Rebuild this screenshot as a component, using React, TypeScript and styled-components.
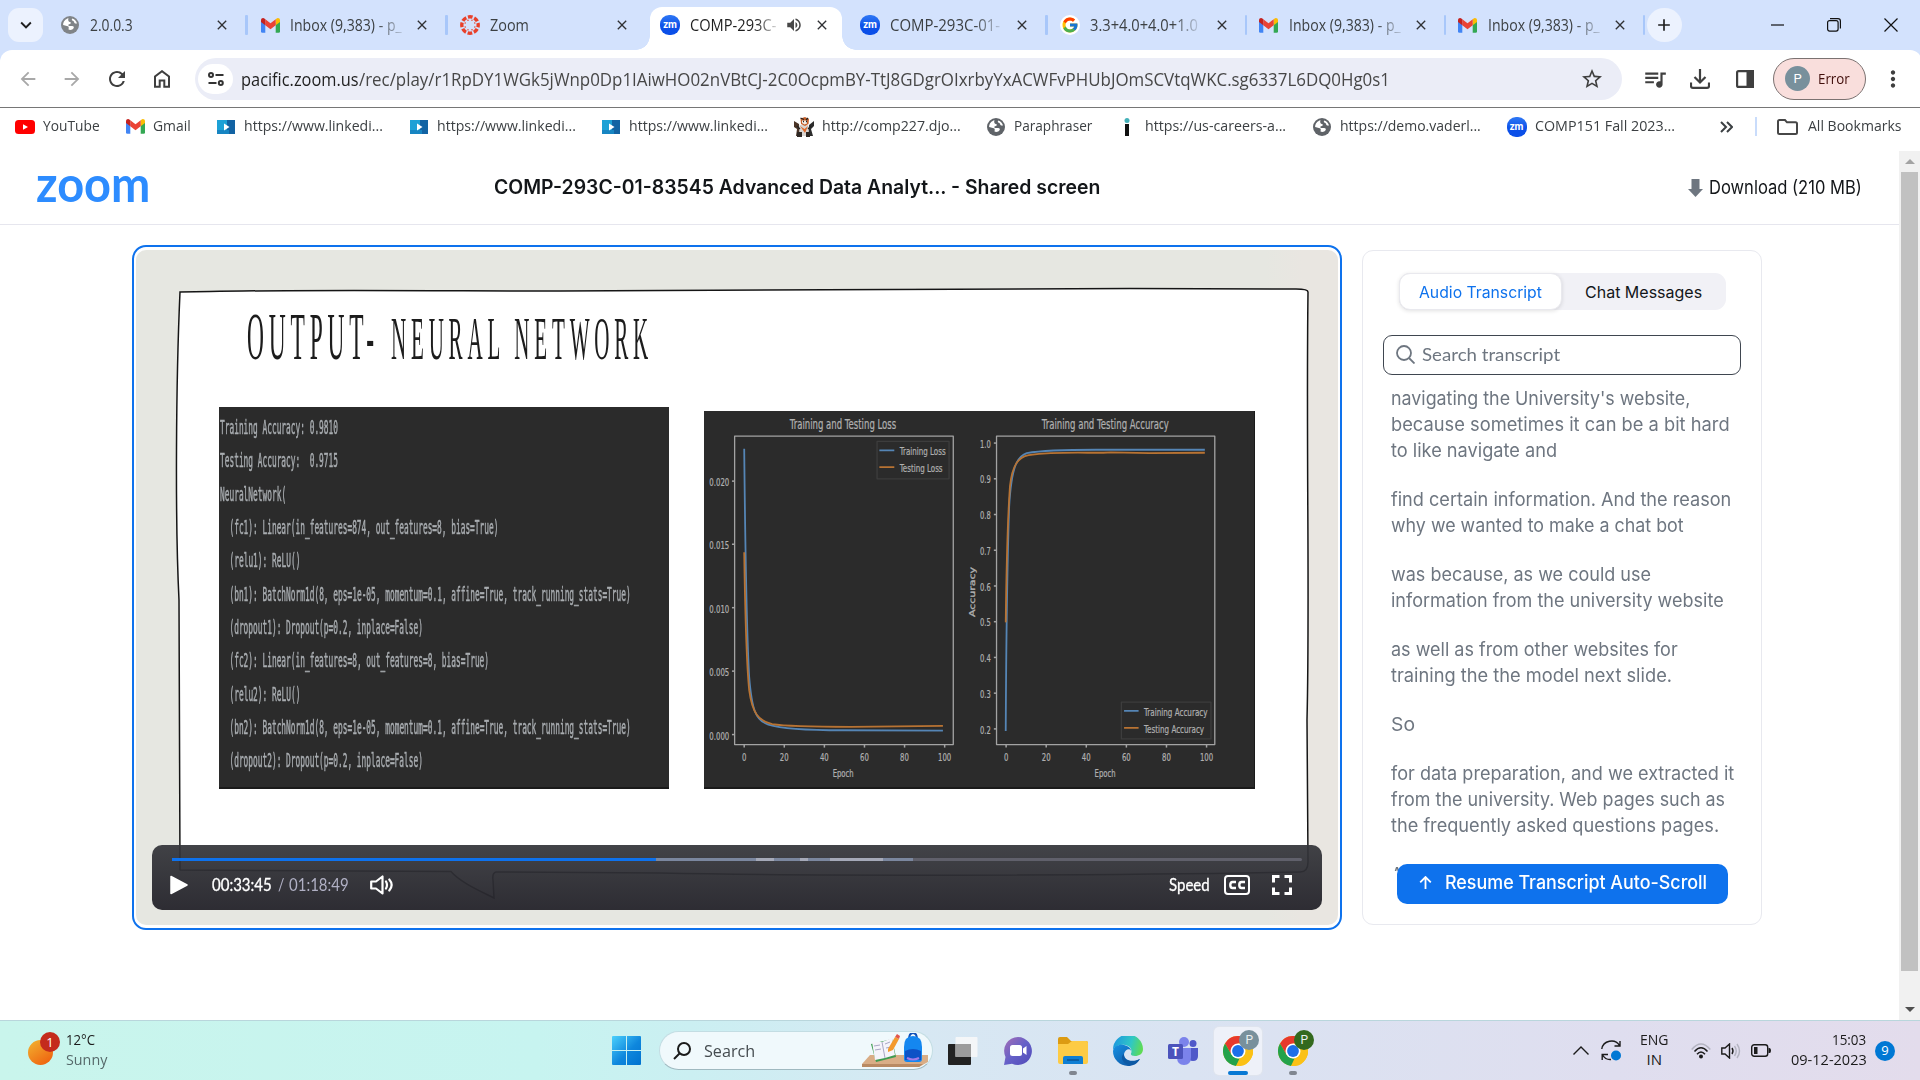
import React, { useLayoutEffect, useRef, useState } from "react";
import styled, { createGlobalStyle, css } from "styled-components";
import {
  MdArrowBack,
  MdArrowForward,
  MdRefresh,
  MdStarOutline,
  MdQueueMusic,
  MdMoreVert,
  MdClose,
  MdAdd,
  MdVolumeUp,
  MdKeyboardArrowDown,
} from "react-icons/md";
import { FcGoogle } from "react-icons/fc";

const UI = `"Open Sans", "Noto Sans", sans-serif`;
const PAGE = `Inter, "Liberation Sans", sans-serif`;

const Global = createGlobalStyle`
  html, body { margin: 0; padding: 0; background: #fff; overflow: hidden; }
  *, *::before, *::after { box-sizing: border-box; }
  svg { display: block; flex: none; }
`;

/* ---------- text fitted to a fixed advance width ---------- */

const FitBox = styled.span<{ $w: number }>`
  display: block;
  flex: none;
  width: ${(p) => p.$w}px;
  white-space: pre;
`;
const FitInner = styled.span`
  display: inline-block;
  transform-origin: 0 50%;
`;

function Fit({ w, children }: { w: number; children: string }) {
  const ref = useRef<HTMLSpanElement>(null);
  const [scale, setScale] = useState(1);
  useLayoutEffect(() => {
    if (ref.current && ref.current.offsetWidth) setScale(w / ref.current.offsetWidth);
  }, [w, children]);
  return (
    <FitBox $w={w}>
      <FitInner ref={ref} style={{ transform: `scaleX(${scale})` }}>
        {children}
      </FitInner>
    </FitBox>
  );
}

/* ---------- shared icons ---------- */

const Globe = ({ color = "#5f6368", size = 18 }) => (
  <svg width={size} height={size} viewBox="0 0 18 18">
    <circle cx="9" cy="9" r="9" fill={color} />
    <path
      d="M7.5 2.2c-3.2.7-5.4 3.400-5.400 6.800l4.700 1.300c.8.2 1 .8.9 1.600l-.2 1.700c1.600.6 4.300.4 5.200-1.500.5-1.300-.3-2.100-1.500-2.100H8.300c-1 0-1.600-1.500-.3-1.800l1-.3c1.200-.4.9-1.500 0-1.800-1.500-.5-2.300-1.700-1.500-3.900Z"
      fill="#fff"
    />
    <path d="M11.300 2.500c-.9 1.300-.4 2 .6 2.300 1.500.5.8 2.200 2.100 2.600l2 .2c-.4-2.400-2.200-4.400-4.700-5.100Z" fill="#fff" />
  </svg>
);

const Gmail = () => (
  <svg width="19" height="15" viewBox="0 0 19 15">
    <path d="M0 2.500V13.500Q0 14.800 1.300 14.800H4.300V5Z" fill="#4285f4" />
    <path d="M19 2.500V13.500Q19 14.800 17.700 14.800H14.700V5Z" fill="#34a853" />
    <path d="M14.700 1.300V7.200L19 4V2.200C19 .2 16.800-.7 15.300.700Z" fill="#fbbc04" />
    <path d="M4.300 7.200V1.300L9.500 5.200 14.700 1.300V7.200L9.500 11.200Z" fill="#ea4335" />
    <path d="M0 2.200V4L4.300 7.200V1.300L3.700.700C2.200-.7 0 .2 0 2.200Z" fill="#c5221f" />
  </svg>
);

const CanvasLogo = () => (
  <svg width="20" height="20" viewBox="0 0 20 20">
    <circle cx="10" cy="10" r="8.200" fill="none" stroke="#e8402a" strokeWidth="3.400" strokeDasharray="4.700 1.740" strokeDashoffset="2.350" />
    {[0, 45, 90, 135, 180, 225, 270, 315].map((a) => (
      <circle key={a} cx="10" cy="4.800" r=".75" fill="#e8402a" transform={`rotate(${a + 22} 10 10)`} />
    ))}
  </svg>
);

const ZmBadge = styled.span`
  width: 20px;
  height: 20px;
  flex: none;
  border-radius: 9px;
  background: linear-gradient(#2f78f5, #0b4fe8 60%);
  color: #fff;
  font: 900 10.500px/18px Lato, sans-serif;
  text-align: center;
`;

const GoogleChip = styled.span`
  width: 20px;
  height: 20px;
  flex: none;
  border-radius: 50%;
  background: #fff;
  display: grid;
  place-items: center;
`;

/* ---------- browser chrome ---------- */

const Screen = styled.div`
  width: 1920px;
  height: 1080px;
  display: flex;
  flex-direction: column;
  background: #fff;
  font-family: ${UI};
  overflow: hidden;
`;

const TabStrip = styled.div`
  height: 50px;
  flex: none;
  background: #d3e2fd;
  display: flex;
  align-items: center;
  padding-left: 8px;
`;

const ChipButton = styled.div<{ $round?: boolean }>`
  width: 35px;
  height: 34px;
  flex: none;
  border-radius: ${(p) => (p.$round ? "17px" : "11px")};
  background: #ecf2fe;
  color: #1f1f1f;
  display: grid;
  place-items: center;
`;

const TabList = styled.div`
  display: flex;
  align-self: stretch;
  margin-left: 7px;
`;

const TabBox = styled.div<{ $w: number; $active?: boolean; $sep?: boolean }>`
  position: relative;
  width: ${(p) => p.$w}px;
  height: 50px;
  display: flex;
  align-items: center;
  padding: 0 4px 0 10px;
  color: ${(p) => (p.$active ? "#1f1f1f" : "#3c4043")};
  font-size: 15.500px;
  ${(p) =>
    p.$sep &&
    css`
      &::after {
        content: "";
        position: absolute;
        left: 195px;
        top: 15px;
        width: 2.500px;
        height: 20px;
        background: #a8c7fa;
        border-radius: 1px;
      }
    `}
  ${(p) =>
    p.$active &&
    css`
      z-index: 1;
      &::before {
        content: "";
        position: absolute;
        z-index: -1;
        left: 0;
        top: 7px;
        width: 192px;
        height: 43px;
        border-radius: 12px 12px 0 0;
        background: #fff;
      }
    `}
`;

const TabFoot = styled.i<{ $right?: boolean }>`
  position: absolute;
  bottom: 0;
  width: 14px;
  height: 14px;
  ${(p) => (p.$right ? "left: 192px;" : "left: -14px;")}
  background: radial-gradient(circle at ${(p) => (p.$right ? "100%" : "0")} 0, transparent 13.500px, #fff 14px);
`;

const TabTitle = styled.div<{ $w: number; $fade?: boolean }>`
  width: ${(p) => p.$w}px;
  margin-left: 10px;
  line-height: 24px;
  ${(p) => p.$fade && "mask-image: linear-gradient(90deg, #000 76%, rgba(0,0,0,.15));"}
`;

const TabClose = styled.span`
  position: absolute;
  left: 164px;
  display: flex;
  color: #303134;
`;
const TabAudio = styled.span`
  margin-left: 8px;
  display: flex;
  color: #474747;
`;
const IconSlot = styled.span<{ $w?: number }>`
  width: ${(p) => p.$w ?? 20}px;
  flex: none;
  display: flex;
  justify-content: center;
`;

const WindowButtons = styled.div`
  margin-left: auto;
  display: flex;
  align-items: center;
  gap: 43px;
  padding-right: 22px;
`;

const Toolbar = styled.div`
  height: 58px;
  flex: none;
  display: flex;
  align-items: center;
  border-bottom: 1px solid #767676;
  color: #474747;
  background: linear-gradient(#d3e2fd, #d3e2fd) 0 0 / 100% 12px no-repeat;
`;
const ToolbarInner = styled.div`
  flex: 1;
  height: 57px;
  display: flex;
  align-items: center;
  background: #fff;
  border-radius: 12px 12px 0 0;
  padding: 0 16px 0 16px;
`;
const ToolIcon = styled.span<{ $w: number; $dim?: boolean }>`
  width: ${(p) => p.$w}px;
  flex: none;
  display: flex;
  justify-content: center;
  color: ${(p) => (p.$dim ? "#a8a8a8" : "#3f3f3f")};
`;
const Omnibox = styled.div`
  width: 1427px;
  height: 42px;
  flex: none;
  border-radius: 21px;
  background: #ebedf7;
  display: flex;
  align-items: center;
  padding: 0 18px 0 3px;
  font-size: 17.500px;
  color: #474747;
`;
const SiteChip = styled.span`
  width: 35px;
  height: 30px;
  border-radius: 17px;
  background: #fff;
  display: grid;
  place-items: center;
  margin-right: 8px;
`;
const Host = styled.span`
  color: #1f1f1f;
`;
const Grow = styled.span`
  flex: 1;
`;
const ErrorPill = styled.div`
  width: 93px;
  height: 42px;
  flex: none;
  display: flex;
  align-items: center;
  gap: 8px;
  padding-left: 11px;
  border: 1px solid #7b7271;
  border-radius: 21px;
  background: #f9dedc;
  color: #410e0b;
  font-size: 15px;
  ${FitBox} {
    margin-top: -2px;
  }
`;
const Avatar = styled.span`
  width: 25px;
  height: 25px;
  border-radius: 50%;
  background: #78909c;
  color: #fff;
  font: 400 13px/25px Roboto, sans-serif;
  text-align: center;
`;

const Bookmarks = styled.div`
  height: 43px;
  flex: none;
  display: flex;
  align-items: center;
  padding: 0 0 6px 15px;
  font-size: 15px;
  line-height: 20px;
  color: #3c4043;
  ${FitBox} {
    margin-top: -3px;
  }
`;
const Bookmark = styled.div<{ $w: number }>`
  width: ${(p) => p.$w}px;
  flex: none;
  display: flex;
  align-items: center;
  gap: 8px;
`;
const BarDivider = styled.span`
  width: 2px;
  height: 19px;
  background: #c9dcfb;
  margin: 0 20px 0 22px;
`;

const YouTube = () => (
  <svg width="20" height="14" viewBox="0 0 20 14">
    <rect width="20" height="14" rx="3.500" fill="#f00" />
    <path d="M8 4.200 13 7 8 9.800Z" fill="#fff" />
  </svg>
);
const LinkedInLearning = () => (
  <svg width="18" height="14" viewBox="0 0 18 14">
    <rect width="18" height="14" fill="#1da1d6" />
    <path d="M10 0h8v14H10Z" fill="#1263a3" />
    <path d="M0 10h12v4H0Z" fill="#1785c2" />
    <path d="M7 3.600 12.500 7 7 10.400Z" fill="#fff" />
  </svg>
);
const TigerMascot = () => (
  <svg width="20" height="20" viewBox="0 0 20 20">
    <path d="M0 4 5 7 6 19H2L3 12 0 10Z" fill="#4a3427" />
    <path d="M20 4 15 8 14 19h5L17 12 20 9Z" fill="#2c2c2c" />
    <path d="M6 8h8l1 11H5Z" fill="#d9d5d2" />
    <path d="M6.500 1.500 11 0l4 2-.5 5L11 9 7 7Z" fill="#c7602b" />
    <path d="M8 3.500h5v3l-2.500 1L8 6Z" fill="#f3ece4" />
    <path d="m6 9 4.500 3L14 9l-3 7Z" fill="#e06a2c" />
    <path d="M6.500 1 10 2.500M14 1l-2 2M9 4.500h1M12 4.500h1M3 9l3 3M17 9l-3 3" stroke="#222" strokeWidth="1.300" />
    <path d="M3 15h5v5H3ZM12 15h4v5h-4Z" fill="#2d2723" />
  </svg>
);
const InfoFigure = () => (
  <svg width="6" height="18" viewBox="0 0 6 18">
    <circle cx="3" cy="2.500" r="2.500" fill="#45b1b9" />
    <rect x="1" y="6" width="4" height="12" fill="#111" />
  </svg>
);

/* ---------- page ---------- */

const Viewport = styled.div`
  height: 869px;
  flex: none;
  display: flex;
`;
const Page = styled.div`
  width: 1899px;
  font-family: ${PAGE};
`;
const PageHeader = styled.header`
  height: 74px;
  border-bottom: 1px solid #e6e6ee;
  display: flex;
  align-items: center;
  padding: 0 37px 0 36px;
`;
const Brand = styled.div`
  width: 458px;
  height: 74px;
  color: #2d8cff;
  font: 700 49px/64px Lato, sans-serif;
`;
const Heading = styled.div`
  font-size: 19.500px;
  font-weight: 600;
  line-height: 30px;
  color: #131619;
  margin-top: -1px;
`;
const Download = styled.div`
  margin-left: auto;
  display: flex;
  align-items: center;
  gap: 6px;
  font-size: 18.500px;
  line-height: 30px;
  color: #131619;
  ${FitBox} {
    margin-top: -1px;
  }
`;
const Main = styled.main`
  display: flex;
  padding: 20px 0 0 132px;
  align-items: flex-start;
`;
const Player = styled.section`
  width: 1210px;
  height: 685px;
  flex: none;
  border: 2px solid #0e72ed;
  border-radius: 14px;
  padding: 3px 2px;
`;
const Slide = styled.div`
  position: relative;
  width: 1202px;
  height: 675px;
  border-radius: 10px;
  overflow: hidden;
  background: linear-gradient(90deg, #e6e7e1 0, #e6e7e1 94%, #e9e6e1 97%);
`;
const SlideFrame = styled.svg`
  position: absolute;
  inset: 0;
`;
const SlideTitle = styled.div`
  position: relative;
  height: 157px;
  padding: 52px 0 0 111px;
  display: flex;
  align-items: baseline;
  gap: 12px;
  font-family: "Liberation Serif", serif;
  line-height: 1;
  color: #1c1c1c;
`;
const TitleWord = styled.div<{ $size: number }>`
  font-size: ${(p) => p.$size}px;
  letter-spacing: 14px;
`;
const Panels = styled.div`
  position: relative;
  display: flex;
  align-items: flex-end;
  padding-left: 83px;
  gap: 35px;
`;
const CodePanel = styled.div`
  width: 450px;
  height: 382px;
  background: #2b2b2b;
  padding: 4px 0 0 1px;
  color: #a9adb1;
  font: 400 19px/33.350px "DejaVu Sans Mono", monospace;
  -webkit-text-stroke: 0.500px #a9adb1;
  box-shadow: inset 0 -2px 0 #1a1a1a;
`;
const ChartPanel = styled.div`
  width: 551px;
  height: 378px;
  background: #2b2b2b;
  box-shadow: inset 0 -2px 0 #1a1a1a, inset -1px 0 0 #1a1a1a;
`;

const Controls = styled.div`
  position: absolute;
  left: 16px;
  top: 595px;
  width: 1170px;
  height: 65px;
  border-radius: 10px;
  background: linear-gradient(rgba(52, 53, 58, 0.93), rgba(38, 37, 44, 0.96));
  padding: 13px 20px 0;
  color: #fff;
  font-family: Lato, sans-serif;
`;
const Track = styled.div`
  display: flex;
  height: 3px;
  background: #60606b;
  border-radius: 2px;
`;
const Segment = styled.i<{ $w: number; $c: string }>`
  width: ${(p) => p.$w}px;
  height: 3px;
  background: ${(p) => p.$c};
`;
const ControlRow = styled.div`
  display: flex;
  align-items: center;
  height: 28px;
  margin: 10px 0 0 -2px;
  font-size: 16.500px;
`;
const Space = styled.span<{ $w: number }>`
  width: ${(p) => p.$w}px;
  flex: none;
`;
const Muted = styled.span`
  color: #b0b0c4;
  display: flex;
  gap: 5px;
`;
const Strong = styled.span`
  -webkit-text-stroke: 0.300px #fff;
`;

const Sidebar = styled.aside`
  width: 400px;
  height: 675px;
  margin: 5px 0 0 20px;
  border: 1px solid #e8e9ef;
  border-radius: 11px;
  padding: 22px 20px 0;
  position: relative;
`;
const Segmented = styled.div`
  width: 327px;
  height: 37px;
  margin-left: 16px;
  border-radius: 11px;
  background: #f1f1f6;
  display: flex;
  font-size: 16px;
  line-height: 36px;
`;
const SegmentTab = styled.div<{ $on?: boolean }>`
  padding: ${(p) => (p.$on ? "0 0 0 19px" : "1px 0 0 23px")};
  width: 163px;
  border-radius: 11px;
  color: ${(p) => (p.$on ? "#0e72ed" : "#131619")};
  ${(p) => p.$on && "background:#fff; border: 1px solid #e9e9ee; box-shadow: 0 1px 4px rgba(0,0,0,.12);"}
`;
const SearchField = styled.div`
  width: 358px;
  height: 40px;
  margin-top: 25px;
  border: 1px solid #3f4650;
  border-radius: 9px;
  display: flex;
  align-items: center;
  gap: 6.500px;
  padding: 0 0 2px 12px;
  color: #6e7680;
  font: 400 18px/30px Lato, sans-serif;
  ${FitBox} {
    margin-top: -1px;
  }
`;
const Transcript = styled.div`
  height: 496px;
  overflow: hidden;
  padding: 10px 0 0 7.500px;
  color: #6e7680;
  font-size: 18.500px;
  line-height: 26px;
`;
const Paragraph = styled.div`
  margin-bottom: 23px;
`;
const ResumeButton = styled.div`
  position: absolute;
  left: 34px;
  top: 613px;
  width: 331px;
  height: 40px;
  border-radius: 10px;
  background: #0e72ed;
  color: #fff;
  display: flex;
  align-items: center;
  gap: 13px;
  padding: 0 0 4px 22px;
  font-size: 18.500px;
  font-weight: 500;
`;

const Scrollbar = styled.div`
  width: 21px;
  background: #f1f1f1;
  display: flex;
  flex-direction: column;
  align-items: center;
`;
const ScrollArrow = styled.div<{ $down?: boolean }>`
  height: 21px;
  flex: none;
  display: grid;
  place-items: center;
  &::before {
    content: "";
    border: 5px solid transparent;
    ${(p) => (p.$down ? "border-top-color:#505050;border-bottom:0;" : "border-bottom-color:#a3a3a3;border-top:0;")}
  }
`;
const Thumb = styled.div`
  width: 17px;
  height: 799px;
  background: #c1c1c1;
  margin-bottom: auto;
`;

/* ---------- taskbar ---------- */

const Taskbar = styled.div`
  height: 60px;
  flex: none;
  border-top: 1px solid #b9d6dc;
  background: linear-gradient(90deg, #c9f5ec 0, #c7f4f0 28%, #cbeff2 36%, #d7e8f3 48%, #dae3f2 62%, #dfdeef 84%, #e3dcec);
  display: flex;
  align-items: center;
  font-size: 15px;
  color: #1b1b1b;
`;
const Weather = styled.div`
  width: 612px;
  display: flex;
  align-items: center;
  padding-left: 28px;
  svg {
    margin-top: -4px;
  }
`;
const Stack = styled.div<{ $align?: string }>`
  display: flex;
  flex-direction: column;
  align-items: ${(p) => p.$align ?? "flex-start"};
  line-height: 20px;
  margin-top: -3px;
`;
const Soft = styled.span`
  color: #56696a;
`;
const SearchPill = styled.div`
  width: 274px;
  height: 39px;
  margin-left: 18px;
  border-radius: 20px;
  background: #f0f9fc;
  border: 1px solid #c3dde3;
  border-bottom-color: #9fb9c0;
  display: flex;
  align-items: center;
  padding: 0 4px 0 13px;
  gap: 13px;
  font-size: 16.500px;
  color: #454c50;
  overflow: hidden;
`;
const Apps = styled.div`
  display: flex;
  gap: 7.150px;
  margin-left: 5.500px;
`;
const AppSlot = styled.div<{ $active?: boolean; $mark?: string }>`
  position: relative;
  width: 48px;
  height: 48px;
  border-radius: 5px;
  display: grid;
  place-items: center;
  ${(p) => p.$active && "background:#eef1f9; box-shadow: 0 0 0 1px #dfe4ee;"}
  &::after {
    content: "";
    position: absolute;
    bottom: 0;
    height: 4px;
    border-radius: 2px;
    left: 50%;
    transform: translateX(-50%);
    ${(p) => (p.$mark === "bar" ? "width:20px;background:#0878d4;" : p.$mark === "dot" ? "width:8px;background:#808690;" : "width:0;")}
  }
`;
const AppBadge = styled.span<{ $c: string }>`
  position: absolute;
  right: 3px;
  top: 3px;
  width: 20px;
  height: 20px;
  border-radius: 50%;
  background: ${(p) => p.$c};
  color: #e9eef0;
  font: 400 12px/20px Roboto, sans-serif;
  text-align: center;
`;
const Tray = styled.div`
  margin-left: auto;
  display: flex;
  align-items: center;
  padding-right: 25px;
`;
const Count = styled.span`
  width: 20px;
  height: 20px;
  border-radius: 50%;
  background: #0078d4;
  color: #fff;
  font-size: 13px;
  line-height: 19px;
  text-align: center;
`;

const Chrome = () => (
  <svg width="30" height="30" viewBox="0 0 30 30">
    <circle cx="15" cy="15" r="15" fill="#fbc116" />
    <path d="M2 7.500A15 15 0 0 1 28 7.500H15L8.500 18.750Z" fill="#e8392c" />
    <path d="M2 7.500 8.500 18.750 15 22.500H16.500L13 29.900A15 15 0 0 1 2 7.500Z" fill="#23a24b" />
    <path d="M15 7.500H28A15 15 0 0 1 13 29.900L21.500 18.750Z" fill="#fbc116" />
    <circle cx="15" cy="15" r="7.500" fill="#fff" />
    <circle cx="15" cy="15" r="5.900" fill="#1d6fe8" />
  </svg>
);

/* ---------- data ---------- */

type TabInfo = { icon: React.ReactNode; text: string; w: number; size: number; fade?: boolean; active?: boolean; sep?: boolean };
const tabs: TabInfo[] = [
  { icon: <Globe color="#808488" />, text: "2.0.0.3", w: 43, size: 200, sep: true },
  { icon: <Gmail />, text: "Inbox (9,383) - p_", w: 112, size: 200, fade: true, sep: true },
  { icon: <CanvasLogo />, text: "Zoom", w: 39, size: 200 },
  { icon: <ZmBadge>zm</ZmBadge>, text: "COMP-293C-", w: 86, size: 200, fade: true, active: true },
  { icon: <ZmBadge>zm</ZmBadge>, text: "COMP-293C-01-", w: 110, size: 199.5, fade: true, sep: true },
  { icon: <GoogleChip><FcGoogle size={18} /></GoogleChip>, text: "3.3+4.0+4.0+1.0", w: 108, size: 199, fade: true, sep: true },
  { icon: <Gmail />, text: "Inbox (9,383) - p_", w: 112, size: 199, fade: true, sep: true },
  { icon: <Gmail />, text: "Inbox (9,383) - p_", w: 112, size: 199, fade: true, sep: true },
];

const bookmarks = [
  { icon: <YouTube />, text: "YouTube", tw: 57, w: 110 },
  { icon: <Gmail />, text: "Gmail", tw: 38, w: 91 },
  { icon: <LinkedInLearning />, text: "https://www.linkedi...", tw: 139, w: 192.5 },
  { icon: <LinkedInLearning />, text: "https://www.linkedi...", tw: 139, w: 192 },
  { icon: <LinkedInLearning />, text: "https://www.linkedi...", tw: 139, w: 193 },
  { icon: <TigerMascot />, text: "http://comp227.djo...", tw: 139, w: 192 },
  { icon: <Globe />, text: "Paraphraser", tw: 78, w: 131.5 },
  { icon: <InfoFigure />, text: "https://us-careers-a...", tw: 141, w: 194.5 },
  { icon: <Globe />, text: "https://demo.vaderl...", tw: 141, w: 195 },
  { icon: <ZmBadge>zm</ZmBadge>, text: "COMP151 Fall 2023...", tw: 140, w: 213 },
];

const code = [
  "Training Accuracy: 0.9810",
  "Testing Accuracy:  0.9715",
  "NeuralNetwork(",
  "  (fc1): Linear(in_features=874, out_features=8, bias=True)",
  "  (relu1): ReLU()",
  "  (bn1): BatchNorm1d(8, eps=1e-05, momentum=0.1, affine=True, track_running_stats=True)",
  "  (dropout1): Dropout(p=0.2, inplace=False)",
  "  (fc2): Linear(in_features=8, out_features=8, bias=True)",
  "  (relu2): ReLU()",
  "  (bn2): BatchNorm1d(8, eps=1e-05, momentum=0.1, affine=True, track_running_stats=True)",
  "  (dropout2): Dropout(p=0.2, inplace=False)",
];

const transcript: [string, number][][] = [
  [["navigating the University's website,", 299], ["because sometimes it can be a bit hard", 339], ["to like navigate and", 166]],
  [["find certain information. And the reason", 340], ["why we wanted to make a chat bot", 293]],
  [["was because, as we could use", 260], ["information from the university website", 333]],
  [["as well as from other websites for", 287], ["training the the model next slide.", 281]],
  [["So", 24]],
  [["for data preparation, and we extracted it", 343], ["from the university. Web pages such as", 334], ["the frequently asked questions pages.", 328]],
  [["And", 33]],
];

/* ---------- charts ---------- */

const ChartText = styled.text`
  font-family: "DejaVu Sans", sans-serif;
  fill: #b0b0b0;
  stroke: #b0b0b0;
  stroke-width: 0.7px;
`;
const Label = ({ x, y, w, size = 34, children }: { x: number; y: number; w: number; size?: number; children: string }) => (
  <ChartText x={x} y={y} fontSize={size} textLength={w} lengthAdjust="spacingAndGlyphs">
    {children}
  </ChartText>
);
const Line = ({ d, c, w = 1.5 }: { d: string; c: string; w?: number }) => (
  <path d={d} fill="none" stroke={c} strokeWidth={w} strokeLinejoin="round" vectorEffect="non-scaling-stroke" />
);
const BLUE = "#5585b5";
const ORANGE = "#b87333";
const AXIS = "#a3a3a3";

const Charts = () => (
  <svg width="551" height="378" viewBox="37 64 1439 1132" preserveAspectRatio="none">
    <Label x={261} y={119} w={278} size={40}>Training and Testing Loss</Label>
    <Label x={919} y={119} w={332} size={40}>Training and Testing Accuracy</Label>
    <Line d="M117 139H688V1063H117ZM801 139H1371V1063H801Z" c={AXIS} w={1.3} />
    {[["0.020", 274], ["0.015", 463], ["0.010", 653], ["0.005", 843], ["0.000", 1033]].map(([t, y]) => (
      <React.Fragment key={t}>
        <Label x={51} y={+y + 15} w={52}>{String(t)}</Label>
        <Line d={`M110 ${y}H117`} c={AXIS} />
      </React.Fragment>
    ))}
    {["1.0", "0.9", "0.8", "0.7", "0.6", "0.5", "0.4", "0.3", "0.2"].map((t, i) => (
      <React.Fragment key={t}>
        <Label x={758} y={160 + i * 107 + 14} w={28}>{t}</Label>
        <Line d={`M794 ${160 + i * 107}H801`} c={AXIS} />
      </React.Fragment>
    ))}
    {[0, 684].map((dx) =>
      ["0", "20", "40", "60", "80", "100"].map((t, i) => (
        <React.Fragment key={t + dx}>
          <Label x={142 + dx + i * 104.700 - t.length * 5.800} y={1113} w={t.length * 11.500}>{t}</Label>
          <Line d={`M${142 + dx + i * 104.700} 1063V1072`} c={AXIS} />
        </React.Fragment>
      ))
    )}
    <Label x={373} y={1161} w={55}>Epoch</Label>
    <Label x={1057} y={1161} w={55}>Epoch</Label>
    <g transform="translate(744 681) rotate(-90)">
      <Label x={0} y={0} w={150} size={21}>Accuracy</Label>
    </g>
    <Line d="M142 177C144 400 147 700 155 860C162 960 172 990 205 1003C240 1016 320 1020 400 1020L661 1021" c={BLUE} w={1.8} />
    <Line d="M142 487C144 640 148 820 155 900C163 970 180 992 215 1002C260 1010 340 1010 420 1010L661 1007" c={ORANGE} w={1.8} />
    <Line d="M825 1022C826 800 829 520 834 350C840 230 855 200 880 190C920 182 990 180 1060 180H1345" c={BLUE} w={1.8} />
    <Line d="M825 697C827 520 831 370 836 290C842 225 858 202 885 196C920 191 970 188 1040 189L1080 189L1100 188L1200 190L1345 189" c={ORANGE} w={1.8} />
    <Line d="M489 155H677V267H489ZM1127 936H1361V1046H1127Z" c="#3d3d3d" w={1.3} />
    <Line d="M495 182H534M1134 962H1172" c={BLUE} w={1.8} />
    <Line d="M495 232H534M1134 1013H1172" c={ORANGE} w={1.8} />
    <Label x={548} y={195} w={120}>Training Loss</Label>
    <Label x={548} y={246} w={112}>Testing Loss</Label>
    <Label x={1186} y={976} w={166}>Training Accuracy</Label>
    <Label x={1186} y={1027} w={157}>Testing Accuracy</Label>
  </svg>
);

/* ---------- composed regions ---------- */

const Tab = ({ t }: { t: TabInfo }) => (
  <TabBox $w={t.size} $active={t.active} $sep={t.sep}>
    {t.active && <><TabFoot /><TabFoot $right /></>}
    <IconSlot>{t.icon}</IconSlot>
    <TabTitle $w={t.w + 1} $fade={t.fade}><Fit w={t.w}>{t.text}</Fit></TabTitle>
    {t.active && <TabAudio><MdVolumeUp size={18} /></TabAudio>}
    <TabClose><MdClose size={16} /></TabClose>
  </TabBox>
);

const BrowserTop = () => (
  <>
    <TabStrip>
      <ChipButton><MdKeyboardArrowDown size={22} /></ChipButton>
      <TabList>{tabs.map((t, i) => <Tab key={i} t={t} />)}</TabList>
      <ChipButton $round><MdAdd size={20} /></ChipButton>
      <WindowButtons>
        <svg width="13" height="14"><path d="M0 7H13" stroke="#111" strokeWidth="1.200" /></svg>
        <svg width="14" height="14" viewBox="0 0 14 14" fill="none" stroke="#111" strokeWidth="1.200">
          <rect x=".6" y="2.600" width="10.500" height="10.500" rx="2" />
          <path d="M3 .6H11Q13.400.6 13.400 3V10.500" />
        </svg>
        <svg width="14" height="14"><path d="M.5.5 13.500 13.500M13.500.5.5 13.500" stroke="#111" strokeWidth="1.200" /></svg>
      </WindowButtons>
    </TabStrip>
    <Toolbar>
      <ToolbarInner>
        <ToolIcon $w={24} $dim><MdArrowBack size={22} /></ToolIcon>
        <Space $w={20} />
        <ToolIcon $w={24} $dim><MdArrowForward size={22} /></ToolIcon>
        <Space $w={21} />
        <ToolIcon $w={24}><MdRefresh size={24} /></ToolIcon>
        <Space $w={21} />
        <ToolIcon $w={24}>
          <svg width="16" height="18" viewBox="0 0 16 18" fill="none" stroke="currentColor" strokeWidth="2">
            <path d="M1 16.800V6.500L8 1.200 15 6.500V16.800H10.300V10.500H5.700V16.800Z" />
          </svg>
        </ToolIcon>
        <Space $w={21} />
        <Omnibox>
          <SiteChip>
            <svg width="16" height="14" viewBox="0 0 16 14" fill="none" stroke="#333" strokeWidth="2">
              <circle cx="3" cy="3" r="2" /><path d="M7.500 3H15.500M.5 11H8.500" /><circle cx="12.800" cy="11" r="2" />
            </svg>
          </SiteChip>
          <Host><Fit w={118}>pacific.zoom.us</Fit></Host>
          <Fit w={1031}>/rec/play/r1RpDY1WGk5jWnp0Dp1IAiwHO02nVBtCJ-2C0OcpmBY-TtJ8GDgrOIxrbyYxACWFvPHUbJOmSCVtqWKC.sg6337L6DQ0Hg0s1</Fit>
          <Grow />
          <MdStarOutline size={24} color="#3f3f3f" />
        </Omnibox>
        <Space $w={20} />
        <ToolIcon $w={26}><MdQueueMusic size={26} /></ToolIcon>
        <Space $w={19} />
        <ToolIcon $w={26}>
          <svg width="20" height="20" viewBox="0 0 20 20" fill="none" stroke="currentColor" strokeWidth="2.200">
            <path d="M10 0V13M4.500 8 10 13.500 15.500 8M1 13.500V17Q1 18.800 2.800 18.800H17.200Q19 18.800 19 17V13.500" />
          </svg>
        </ToolIcon>
        <Space $w={19} />
        <ToolIcon $w={26}>
          <svg width="18" height="18" viewBox="0 0 18 18">
            <rect x="1.100" y="1.100" width="15.800" height="15.800" rx="1.500" fill="none" stroke="currentColor" strokeWidth="2.200" />
            <path d="M10.500 0H18V18H10.500Z" fill="currentColor" />
          </svg>
        </ToolIcon>
        <Space $w={15} />
        <ErrorPill><Avatar>P</Avatar><Fit w={32}>Error</Fit></ErrorPill>
        <Space $w={14} />
        <ToolIcon $w={26}><MdMoreVert size={26} /></ToolIcon>
      </ToolbarInner>
    </Toolbar>
    <Bookmarks>
      {bookmarks.map((b, i) => (
        <Bookmark key={i} $w={b.w}><IconSlot>{b.icon}</IconSlot><Fit w={b.tw}>{b.text}</Fit></Bookmark>
      ))}
      <svg width="13" height="12" viewBox="0 0 13 12" fill="none" stroke="#3c4043" strokeWidth="2"><path d="m1 1 5 5-5 5M7 1l5 5-5 5" /></svg>
      <BarDivider />
      <svg width="21" height="16" viewBox="0 0 21 16" fill="none" stroke="#474747" strokeWidth="2">
        <path d="M1 2.500Q1 1 2.500 1H8L10 3.300H18.500Q20 3.300 20 4.800V13.500Q20 15 18.500 15H2.500Q1 15 1 13.500Z" />
      </svg>
      <Space $w={10} />
      <Fit w={93.5}>All Bookmarks</Fit>
    </Bookmarks>
  </>
);

const PlayerView = () => (
  <Player>
    <Slide>
      <SlideFrame width="1202" height="675" viewBox="136 250 1202 675">
        <path
          d="M180 292 210 291.500C300 289.500 460 291 560 291 800 289 1000 288 1130 288.500L1296 289Q1308 289 1308 292C1306 450 1310 600 1307 720L1308 862Q1308 872 1300 872C1100 876 800 876 660 873L496 872Q492 873 493 880L494 898C478 890 460 882 451 871.500L180 870C180 760 179 650 179 600 175 520 176 380 180 292Z"
          fill="#fff"
          stroke="#151515"
          strokeWidth="1.500"
        />
      </SlideFrame>
      <SlideTitle>
        <TitleWord $size={68}><Fit w={132}>OUTPUT-</Fit></TitleWord>
        <TitleWord $size={61}><Fit w={262}>NEURAL NETWORK</Fit></TitleWord>
      </SlideTitle>
      <Panels>
        <CodePanel>{code.map((l, i) => <Fit key={i} w={l.length * 4.72}>{l}</Fit>)}</CodePanel>
        <ChartPanel><Charts /></ChartPanel>
      </Panels>
      <Controls>
        <Track>
          <Segment $w={484} $c="#0e72ed" />
          <Segment $w={100} $c="#7b879f" />
          <Segment $w={18} $c="#a5a9b8" />
          <Segment $w={26} $c="#7b879f" />
          <Segment $w={8} $c="#a5a9b8" />
          <Segment $w={22} $c="#7b879f" />
          <Segment $w={53} $c="#a5a9b8" />
          <Segment $w={30} $c="#7b879f" />
        </Track>
        <ControlRow>
          <svg width="18" height="20" viewBox="0 0 18 20"><path d="M1 1.500 17 10 1 18.500Z" fill="#fff" stroke="#fff" strokeWidth="1.500" strokeLinejoin="round" /></svg>
          <Space $w={23.5} />
          <Strong><Fit w={60}>00:33:45</Fit></Strong>
          <Space $w={6} />
          <Muted><Fit w={6}>/</Fit><Fit w={60}>01:18:49</Fit></Muted>
          <Space $w={21} />
          <svg width="24" height="20" viewBox="0 0 24 20" fill="none" stroke="#fff" strokeWidth="2.200">
            <path d="M1.200 6.500H6L12.500 1.500V18.500L6 13.500H1.200Z" strokeLinejoin="round" />
            <path d="M16 6.500Q18 10 16 13.500M19.300 4.500Q24 10 19.300 15.500" strokeLinecap="round" />
          </svg>
          <Grow />
          <Strong><Fit w={41}>Speed</Fit></Strong>
          <Space $w={14} />
          <svg width="26" height="20" viewBox="0 0 26 20" fill="none" stroke="#fff">
            <rect x="1" y="1" width="24" height="18" rx="3" strokeWidth="2" />
            <path d="M12 7H8.500Q6.300 7 6.300 10T8.500 13H12M21 7H17.500Q15.300 7 15.300 10T17.500 13H21" strokeWidth="2.400" />
          </svg>
          <Space $w={22} />
          <svg width="20" height="20" viewBox="0 0 20 20" fill="none" stroke="#fff" strokeWidth="3">
            <path d="M1.500 7.500V1.500H7.500M12.500 1.500H18.500V7.500M18.500 12.500V18.500H12.500M7.500 18.500H1.500V12.500" />
          </svg>
          <Space $w={10} />
        </ControlRow>
      </Controls>
    </Slide>
  </Player>
);

const SidebarView = () => (
  <Sidebar>
    <Segmented>
      <SegmentTab $on><Fit w={123}>Audio Transcript</Fit></SegmentTab>
      <SegmentTab><Fit w={117}>Chat Messages</Fit></SegmentTab>
    </Segmented>
    <SearchField>
      <svg width="19" height="19" viewBox="0 0 19 19" fill="none" stroke="#6e7680" strokeWidth="1.800">
        <circle cx="8" cy="8" r="7" /><path d="m13 13 5.500 5.500" />
      </svg>
      <Fit w={138}>Search transcript</Fit>
    </SearchField>
    <Transcript>
      {transcript.map((p, i) => (
        <Paragraph key={i}>{p.map(([t, w]) => <Fit key={t} w={w}>{t}</Fit>)}</Paragraph>
      ))}
    </Transcript>
    <ResumeButton>
      <svg width="13" height="13" viewBox="0 0 13 13" fill="none" stroke="#fff" strokeWidth="1.800"><path d="M6.500 13V1M1.200 6.300 6.500 1 11.800 6.300" /></svg>
      <Fit w={262}>Resume Transcript Auto-Scroll</Fit>
    </ResumeButton>
  </Sidebar>
);

const TaskbarView = () => (
  <Taskbar>
    <Weather>
      <svg width="32" height="34" viewBox="0 0 32 34">
        <defs><linearGradient id="sun" x1="0" y1="0" x2=".7" y2="1"><stop offset="0" stopColor="#f2b531" /><stop offset="1" stopColor="#ef6410" /></linearGradient></defs>
        <circle cx="12.500" cy="20.500" r="12.500" fill="url(#sun)" />
        <circle cx="22" cy="10" r="10" fill="#c42b1c" />
        <text x="22" y="15" fontFamily="Open Sans" fontSize="13" fill="#fff" textAnchor="middle">1</text>
      </svg>
      <Space $w={6} />
      <Stack><Fit w={29}>12°C</Fit><Soft><Fit w={41}>Sunny</Fit></Soft></Stack>
    </Weather>
    <svg width="29" height="29" viewBox="0 0 29 29">
      <defs><linearGradient id="win" x1="0" y1="0" x2="1" y2="1"><stop offset="0" stopColor="#4bd0fc" /><stop offset=".55" stopColor="#0f87dd" /><stop offset="1" stopColor="#0072cf" /></linearGradient></defs>
      <path d="M0 1Q0 0 1 0H14V14H0ZM15 0H28Q29 0 29 1V14H15ZM0 15H14V29H1Q0 29 0 28ZM15 15H29V28Q29 29 28 29H15Z" fill="url(#win)" />
    </svg>
    <SearchPill>
      <svg width="18" height="18" viewBox="0 0 18 18" fill="none" stroke="#1b1b1b" strokeWidth="2"><circle cx="11" cy="7" r="6" /><path d="M6.500 11.500 1 17" /></svg>
      <Fit w={51}>Search</Fit>
      <Grow />
      <svg width="66" height="35" viewBox="0 0 66 35">
        <path d="M8 22H66V29L57 34H0V31Z" fill="#d9ad86" />
        <path d="M0 31H61L57 34H0Z" fill="#b98a63" />
        <path d="M9 11 30 6 34 24 14 29Z" fill="#3e9b50" />
        <path d="M10 9 20 9 30 5 33 22 23 25 13 27Z" fill="#f5f4fb" />
        <path d="M20 9 23 25M12 13l6-1M13 17l6-1M23 11l5-2M24 15l5-1" stroke="#a9a7c4" strokeWidth="1" />
        <path d="M26 16 33 4 37 6 31 17 26 19Z" fill="#f39a2d" />
        <path d="m33 4 2-3 3 2-1 3Z" fill="#e2574c" />
        <path d="M47 7Q47 0 51 0T55 7" fill="none" stroke="#1452b8" strokeWidth="2" />
        <path d="M42 14Q42 3 51 3T60 14V26Q60 29 57 29H45Q42 29 42 26Z" fill="#1487f0" />
        <path d="M43 18Q51 14 59 18V27H43Z" fill="#0d52c6" />
        <path d="M45 25Q51 28 57 25" stroke="#a07be8" strokeWidth="2" fill="none" />
      </svg>
    </SearchPill>
    <Apps>
      <AppSlot>
        <svg width="30" height="28" viewBox="0 0 30 28"><rect y="7" width="23" height="21" rx="1" fill="#222" /><rect x="7.500" width="22" height="20" rx="1" fill="#f6f7f9" opacity=".92" /><path d="M7.500 7H23V20H7.500Z" fill="#9c9c9c" /></svg>
      </AppSlot>
      <AppSlot>
        <svg width="29" height="28" viewBox="0 0 29 28">
          <defs><linearGradient id="chat" x1="0" y1="0" x2="1" y2="1"><stop offset="0" stopColor="#a66fb5" /><stop offset=".5" stopColor="#6560c8" /><stop offset="1" stopColor="#504ab8" /></linearGradient></defs>
          <path d="M15 0A14 14 0 1 1 9 26.700L1 28 2.500 20A14 14 0 0 1 15 0Z" fill="url(#chat)" />
          <rect x="7" y="8" width="12" height="11" rx="2.500" fill="#fff" /><path d="M20 11.500 23.500 9V18L20 15.500Z" fill="#fff" />
        </svg>
      </AppSlot>
      <AppSlot $mark="dot">
        <svg width="30" height="27" viewBox="0 0 30 27">
          <path d="M0 2Q0 0 2 0H9L13 4H28Q30 4 30 6V12H0Z" fill="#dc9b12" />
          <path d="M0 7H10L14 4H28Q30 4 30 6V25Q30 27 28 27H2Q0 27 0 25Z" fill="#fdcb45" />
          <path d="M5 27V21Q5 19 7 19H23Q25 19 25 21V27Z" fill="#0f7fd4" /><path d="M9 23H21" stroke="#0b5394" strokeWidth="1.500" />
        </svg>
      </AppSlot>
      <AppSlot>
        <svg width="30" height="30" viewBox="0 0 30 30">
          <defs>
            <linearGradient id="edgeTop" x1="0" y1=".3" x2="1" y2=".5"><stop offset="0" stopColor="#1d97e0" /><stop offset=".6" stopColor="#30c7c5" /><stop offset="1" stopColor="#5fdc53" /></linearGradient>
            <linearGradient id="edgeBot" x1="0" y1="0" x2="1" y2="1"><stop offset="0" stopColor="#1791e3" /><stop offset="1" stopColor="#0b4c9a" /></linearGradient>
          </defs>
          <path d="M0 14A15 15 0 0 1 30 13C30 18 26 20 22 20 19 20 17.500 19 18 17.500 19 16 19 10 12 9 5 8 1 12 0 14Z" fill="url(#edgeTop)" />
          <path d="M0 15C1 10 6 8 11 9 15 10 18 12 18 15 17 12 12 13 11 18 11 24 18 27 27 23 24 28 20 30 15 30A15 15 0 0 1 0 15Z" fill="url(#edgeBot)" />
          <path d="M11 18C10 24 18 28 27 23 23 29 14 31 10 25 8 22 9 19 11 18Z" fill="#0c59a4" />
        </svg>
      </AppSlot>
      <AppSlot>
        <svg width="30" height="28" viewBox="0 0 30 28">
          <circle cx="16" cy="5" r="5" fill="#7b83eb" /><circle cx="25" cy="6.500" r="3.500" fill="#5059c9" />
          <path d="M20 11H30V19Q30 24 25 24T20 19Z" fill="#5059c9" /><path d="M9 11H23V20Q23 28 16 28T9 20Z" fill="#7b83eb" />
          <rect y="7" width="15" height="15" rx="1.500" fill="#4b53bc" />
          <text x="7.500" y="19" fontFamily="Open Sans" fontWeight="700" fontSize="12" fill="#fff" textAnchor="middle">T</text>
        </svg>
      </AppSlot>
      <AppSlot $active $mark="bar"><Chrome /><AppBadge $c="#78909c">P</AppBadge></AppSlot>
      <AppSlot $mark="dot"><Chrome /><AppBadge $c="#33691e">P</AppBadge></AppSlot>
    </Apps>
    <Tray>
      <svg width="16" height="9" viewBox="0 0 16 9" fill="none" stroke="#1b1b1b" strokeWidth="1.400"><path d="M.5 8.500 8 1 15.500 8.500" /></svg>
      <Space $w={12} />
      <svg width="20" height="21" viewBox="0 0 20 21" fill="none" stroke="#1b1b1b" strokeWidth="1.400">
        <path d="M.8 9C2 .5 14-2 18.500 5.500M19 1V6H13.500M1.200 20V14.500H7M1.500 15Q4.500 20 10 19.500" />
        <circle cx="15" cy="15.500" r="5" fill="#0078d4" stroke="none" />
      </svg>
      <Space $w={19} />
      <Stack $align="center"><Fit w={29}>ENG</Fit><Fit w={15}>IN</Fit></Stack>
      <Space $w={22} />
      <svg width="20" height="16" viewBox="0 0 20 16" fill="none" strokeWidth="1.500">
        <path d="M.7 6.500Q10-4.500 19.300 6.500" stroke="#b3b3c0" /><path d="M3.500 8.500Q10 1 16.500 8.500M6 11.300Q10 6.500 14 11.300" stroke="#1b1b1b" /><circle cx="10" cy="13.500" r="2" fill="#1b1b1b" />
      </svg>
      <Space $w={10} />
      <svg width="20" height="16" viewBox="0 0 20 16" fill="none" strokeWidth="1.400">
        <path d="M.8 5H4L8.500 1V15L4 11H.8Z" stroke="#1b1b1b" /><path d="M11 5Q13 8 11 11" stroke="#1b1b1b" /><path d="M13.500 3Q17 8 13.500 13M16 1Q21 8 16 15" stroke="#b3b3c0" />
      </svg>
      <Space $w={10} />
      <svg width="20" height="13" viewBox="0 0 20 13"><rect x=".7" y=".7" width="16" height="11.600" rx="2.500" fill="none" stroke="#1b1b1b" strokeWidth="1.400" /><path d="M3 3H6.500V10H3ZM17.500 4H18.500Q20 4 20 6.500T18.500 9H17.500Z" fill="#1b1b1b" /></svg>
      <Space $w={20} />
      <Stack $align="flex-end"><Fit w={34}>15:03</Fit><Fit w={75.5}>09-12-2023</Fit></Stack>
      <Space $w={9} />
      <Count>9</Count>
    </Tray>
  </Taskbar>
);

export default function App() {
  return (
    <Screen>
      <Global />
      <BrowserTop />
      <Viewport>
        <Page>
          <PageHeader>
            <Brand><Fit w={114}>zoom</Fit></Brand>
            <Heading><Fit w={606}>COMP-293C-01-83545 Advanced Data Analyt... - Shared screen</Fit></Heading>
            <Download>
              <svg width="15" height="18" viewBox="0 0 15 18"><path d="M3.500 0H11.500V10H15L7.500 18 0 10H3.500Z" fill="#6e7680" /></svg>
              <Fit w={153}>Download (210 MB)</Fit>
            </Download>
          </PageHeader>
          <Main>
            <PlayerView />
            <SidebarView />
          </Main>
        </Page>
        <Scrollbar><ScrollArrow /><Thumb /><ScrollArrow $down /></Scrollbar>
      </Viewport>
      <TaskbarView />
    </Screen>
  );
}
